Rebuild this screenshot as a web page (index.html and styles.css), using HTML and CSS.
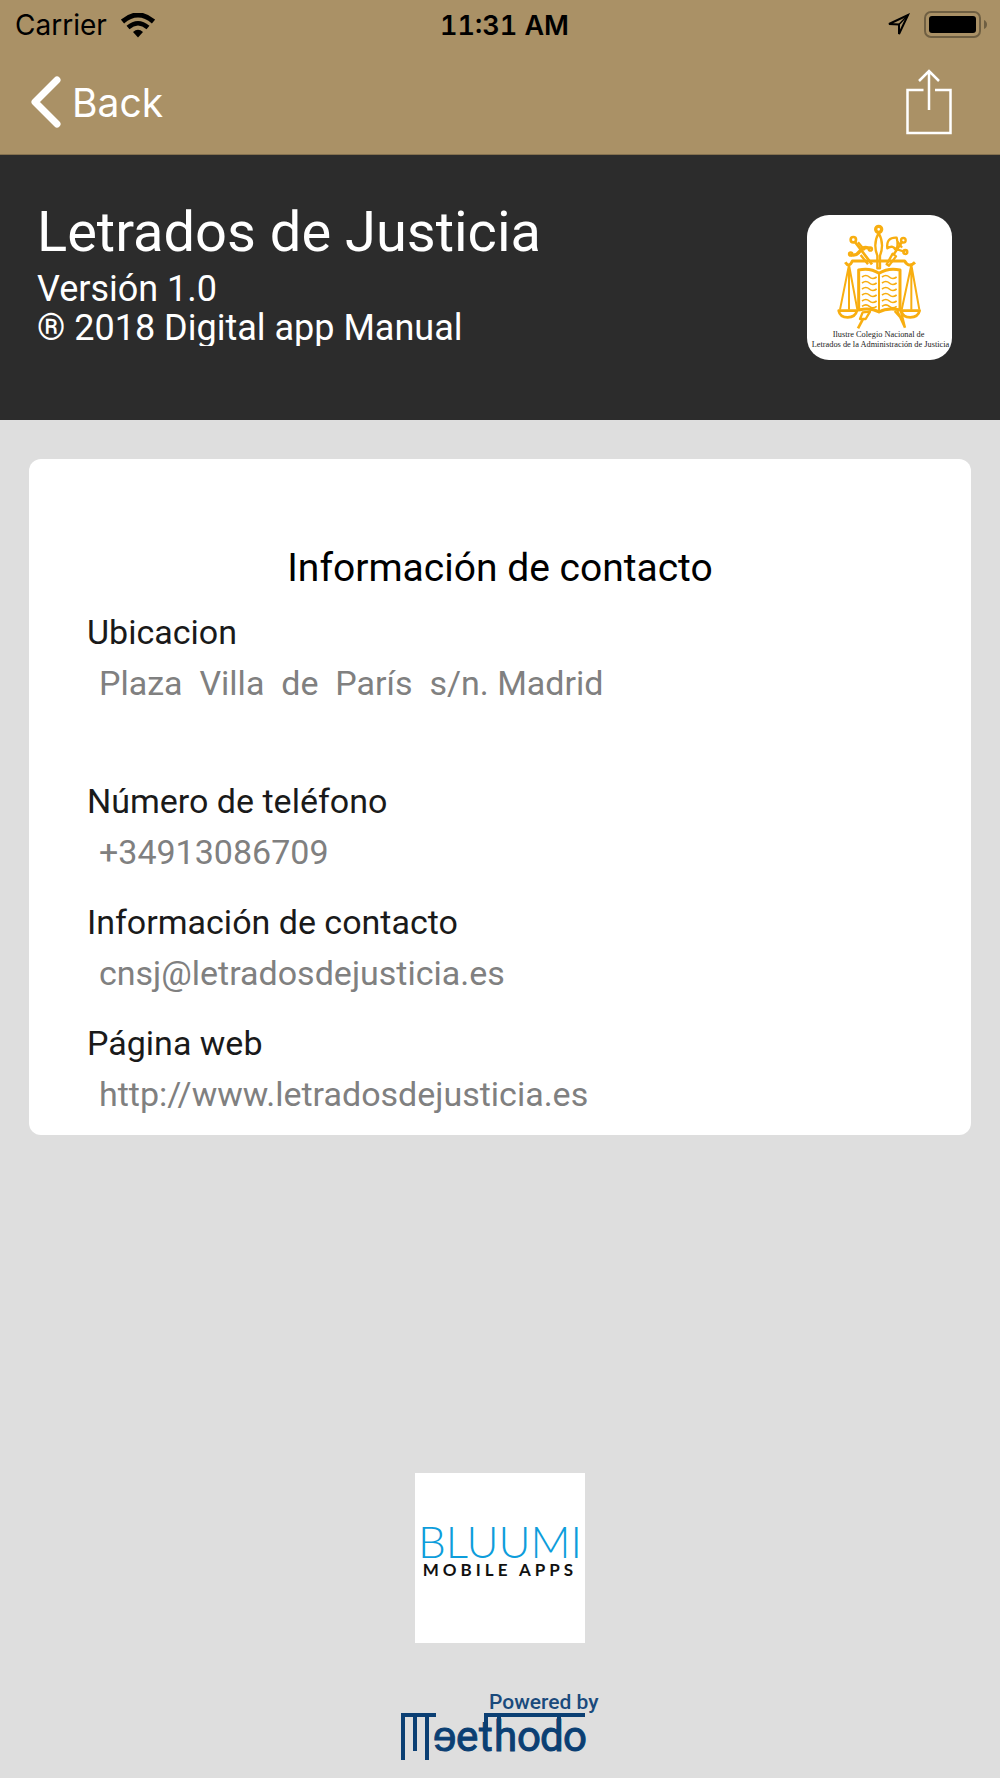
FILE: index.html
```html
<!DOCTYPE html>
<html lang="es">
<head>
<meta charset="utf-8">
<meta name="viewport" content="width=device-width, initial-scale=1">
<title>Letrados de Justicia</title>
<link rel="stylesheet" href="styles.css">
</head>
<body>
<div class="page">
  <header class="topbar">
    <div class="status">
      <div class="status-left">
        <span>Carrier</span>
        <svg class="wifi" viewBox="0 0 34 25" aria-hidden="true">
          <path d="M1.500 8.500Q17-4.500 32.500 8.500" fill="none" stroke="#000" stroke-width="5"/>
          <path d="M7 14.500Q17 6 27 14.500" fill="none" stroke="#000" stroke-width="4.500"/>
          <path d="M12 19Q17 14.500 22 19L17 24.500Z"/>
        </svg>
      </div>
      <span class="time">11:31 AM</span>
      <div class="status-right">
        <svg class="location" viewBox="0 0 24 24" aria-hidden="true">
          <path d="M22 2L13 21V11.500L3 11Z" fill="none" stroke="#000" stroke-width="2"/>
          <path d="M13 11.500L22 2" stroke="#000" stroke-width="1.500"/>
        </svg>
        <svg class="battery" viewBox="0 0 64 28" aria-hidden="true">
          <rect x="1" y="1" width="55" height="25" rx="6" fill="none" stroke="#6f5f42" stroke-width="2"/>
          <rect x="5" y="5" width="47" height="17" rx="3"/>
          <path d="M60 9Q63 10.500 63 13.500T60 18Z" fill="#6f5f42"/>
        </svg>
      </div>
    </div>
    <nav class="nav">
      <button class="back" type="button">
        <svg class="chevron" viewBox="0 0 30 52" aria-hidden="true"><path d="M26 4L4 26L26 48" fill="none" stroke="#fff" stroke-width="7" stroke-linecap="round" stroke-linejoin="round"/></svg>
        <span>Back</span>
      </button>
      <button class="share" type="button" aria-label="Compartir">
        <svg viewBox="0 0 48 66" aria-hidden="true"><path d="M18.500 21H2.500V64H45.500V21H30M24 41V3M14 12L24 2L34 12" fill="none" stroke="#fff" stroke-width="2.500"/></svg>
      </button>
    </nav>
  </header>

  <section class="hero">
    <div class="hero-text">
      <h1>Letrados de Justicia</h1>
      <p>Versión 1.0</p>
      <p class="copyright">® 2018 Digital app Manual</p>
    </div>
    <svg class="emblem" viewBox="31 30 435 435" role="img" aria-label="Ilustre Colegio Nacional de Letrados de la Administración de Justicia">
      <rect x="31" y="30" width="435" height="435" fill="#fff"/>
      <g fill="none" stroke="#f8ae10" stroke-width="7" stroke-linejoin="round">
        <!-- crossed staffs behind the book -->
        <path d="M176 112L226 178M170 104m-8 0a8 8 0 1 0 16 0a8 8 0 1 0-16 0" stroke-width="8"/>
        <path d="M160 148Q178 156 190 138T222 132" stroke-width="10"/>
        <circle cx="162" cy="147" r="5"/><circle cx="221" cy="132" r="5"/>
        <path d="M184 112L204 136M192 150L214 178" />
        <path d="M318 108L290 150M277 182L298 154L288 146L270 178Z"/>
        <path d="M300 98Q268 96 272 130Q290 118 298 136Q306 122 300 98Z"/>
        <circle cx="320" cy="106" r="7"/><circle cx="326" cy="141" r="6"/>
        <path d="M292 130L326 141M303 110L316 128"/>
        <path d="M198 322L190 342L207 342L220 320Z"/>
        <path d="M198 344L184 370" stroke-width="8"/>
        <path d="M302 318L325 368M312 316L325 368M294 318L318 345"/>
        <!-- central sword and beam -->
        <circle cx="246" cy="73" r="9" stroke-width="10"/>
        <path d="M246 84Q228 116 242 152V190H250V152Q264 116 246 84Z"/>
        <path d="M146 172Q157 190 167 168H324Q336 190 355 172" stroke-width="9"/>
        <!-- scales -->
        <path d="M157 180L130 314M157 180V314M157 180L182 314M344 180L315 314M344 180V314M344 180L368 314" stroke-width="6"/>
        <path d="M126 317H181Q176 337 153 337T126 317ZM314 317H369Q364 337 341 337T314 317Z" stroke-width="8"/>
        <!-- open book -->
        <path d="M247 205Q220 187 186 195V315Q222 307 247 321Q272 307 310 315V195Q275 187 247 205Z" fill="#fff" stroke-width="9"/>
        <path d="M247 205V320" stroke-width="6"/>
        <path d="M196 216q12-9 22 0t22 0M196 234q12-9 22 0t22 0M196 252q12-9 22 0t22 0M196 270q12-9 22 0t22 0M196 288q12-9 22 0t22 0M196 304q12-9 22 0t22 0M256 216q12-9 22 0t22 0M256 234q12-9 22 0t22 0M256 252q12-9 22 0t22 0M256 270q12-9 22 0t22 0M256 288q12-9 22 0t22 0M256 304q12-9 22 0t22 0" stroke-width="5"/>
      </g>
      <g class="emblem-text">
        <text x="108" y="397">Ilustre Colegio Nacional de</text>
        <text x="45" y="427">Letrados de la Administración de Justicia</text>
      </g>
    </svg>
  </section>

  <main class="card">
    <h2>Información de contacto</h2>
    <dl class="contact">
      <div class="entry entry-tall">
        <dt>Ubicacion</dt>
        <dd>Plaza  Villa  de  París  s/n. Madrid</dd>
      </div>
      <div class="entry">
        <dt>Número de teléfono</dt>
        <dd><a href="tel:+34913086709">+34913086709</a></dd>
      </div>
      <div class="entry">
        <dt>Información de contacto</dt>
        <dd><a href="mailto:cnsj@letradosdejusticia.es">cnsj@letradosdejusticia.es</a></dd>
      </div>
      <div class="entry">
        <dt>Página web</dt>
        <dd><a href="http://www.letradosdejusticia.es">http://www.letradosdejusticia.es</a></dd>
      </div>
    </dl>
  </main>

  <footer class="credits">
    <div class="bluumi">
      <span class="bluumi-name">BLUUMI</span>
      <span class="bluumi-sub">MOBILE APPS</span>
    </div>
    <svg class="meethodo" viewBox="0 0 200 72" role="img" aria-label="Powered by Meethodo">
      <text class="powered" x="89" y="19">Powered by</text>
      <g fill="none" stroke="#0b3f73" stroke-width="4">
        <path d="M3 70V25H36M15 25V61M27 25V70"/>
        <path d="M86 40V25H185M99 40V25M159 40V25"/>
      </g>
      <text class="wordmark" x="33 56 79 94 117 140 163" y="61">ɘethodo</text>
    </svg>
  </footer>
</div>
</body>
</html>
```
FILE: styles.css
```css
* {
  box-sizing: border-box;
}

body {
  margin: 0;
  background: #dedede;
  font-family: Roboto, "Liberation Sans", sans-serif;
}

h1, h2, p, dl, dd {
  margin: 0;
  font-weight: 400;
}

button {
  padding: 0;
  border: 0;
  background: none;
  color: inherit;
  font: inherit;
}

a {
  color: inherit;
  text-decoration: none;
}

svg {
  display: block;
}

.page {
  display: flex;
  flex-direction: column;
  min-height: 100vh;
}

.topbar {
  background: #aa9166;
  border-bottom: 1px solid #85714f;
  font-family: Inter, "Liberation Sans", sans-serif;
}

.status {
  display: grid;
  grid-template-columns: 1fr auto 1fr;
  align-items: center;
  height: 50px;
  padding: 0 12px 0 15px;
  font-size: 28px;
  color: #000;
}

.status-left, .status-right {
  display: flex;
  align-items: center;
  gap: 14px;
}

.status-right {
  justify-content: flex-end;
}

.time {
  padding-left: 6px;
  font-size: 27px;
  font-weight: 600;
  font-variant-numeric: tabular-nums;
}

.wifi {
  width: 34px;
  height: 25px;
}

.location {
  width: 24px;
  height: 24px;
}

.battery {
  width: 64px;
  height: 28px;
}

.nav {
  display: flex;
  align-items: center;
  justify-content: space-between;
  height: 104px;
  padding: 0 47px 0 31px;
  color: #fff;
}

.back {
  display: flex;
  align-items: center;
  gap: 11px;
  font-size: 39px;
}

.chevron {
  width: 30px;
  height: 52px;
}

.share svg {
  width: 48px;
  height: 66px;
}

.hero {
  display: flex;
  align-items: center;
  justify-content: space-between;
  height: 265px;
  padding: 0 48px 0 37px;
  background: #2c2c2c;
  color: #fff;
}

.hero-text {
  padding-bottom: 30px;
  font-size: 36px;
  line-height: 39px;
}

.hero-text h1 {
  margin-bottom: 6px;
  font-size: 56px;
  line-height: 64px;
}

.copyright {
  height: 37px;
  overflow: hidden;
}

.emblem {
  width: 145px;
  height: 145px;
  border-radius: 22px;
}

.emblem-text {
  font-family: "Liberation Serif", serif;
  font-size: 25px;
  fill: #222;
}

.card {
  margin: 39px 29px 0;
  padding: 86px 58px 12px;
  border-radius: 12px;
  background: #fff;
}

.card h2 {
  font-size: 39px;
  line-height: 46px;
  text-align: center;
}

.contact {
  font-size: 34px;
}

.entry {
  height: 121px;
}

.entry-tall {
  height: 169px;
}

.entry dt {
  padding-top: 21px;
  line-height: 40px;
  color: #1a1a1a;
}

.entry dd {
  padding: 11px 0 0 12px;
  line-height: 40px;
  white-space: pre-wrap;
  color: #808080;
}

.credits {
  display: flex;
  flex-direction: column;
  align-items: center;
  gap: 47px;
  margin-top: auto;
  padding: 60px 0 16px;
}

.bluumi {
  display: flex;
  flex-direction: column;
  align-items: center;
  justify-content: center;
  width: 170px;
  height: 170px;
  padding-bottom: 14px;
  background: #fff;
  font-family: Lato, "Liberation Sans", sans-serif;
  white-space: nowrap;
}

.bluumi-name {
  font-size: 44px;
  font-weight: 300;
  line-height: 38px;
  color: #0d9ddb;
}

.bluumi-sub {
  font-size: 17px;
  font-weight: 700;
  line-height: 20px;
  letter-spacing: 4px;
  color: #111;
}

.meethodo {
  width: 200px;
  height: 72px;
}

.powered {
  font-size: 21px;
  font-weight: 500;
  fill: #1a4a7c;
}

.wordmark {
  font-size: 42px;
  font-weight: 400;
  fill: #0b3f73;
  stroke: #0b3f73;
}
```
